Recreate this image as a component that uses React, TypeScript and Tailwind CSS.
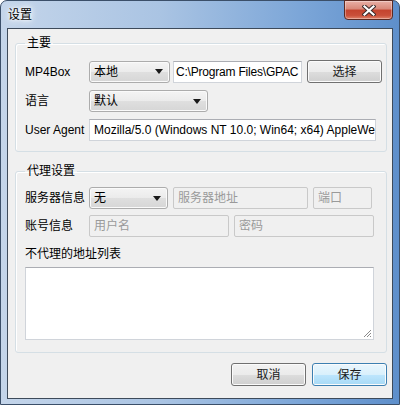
import React from "react";

const font = "font-['Liberation_Sans','Noto_Sans_CJK_SC',sans-serif]";

function Combo({ label, width }: { label: string; width: string }) {
  return (
    <div
      className={`${width} h-[22px] flex items-center justify-between pl-[4px] pr-[6px] rounded-[3px] border border-[#acacac] bg-[linear-gradient(180deg,#f4f4f4_0%,#ebebeb_50%,#dfdfdf_51%,#d6d6d6_100%)] shadow-[inset_0_0_0_1px_#fafafa]`}
    >
      <span className="text-[12px] text-black">{label}</span>
      <svg width="8" height="5" viewBox="0 0 8 5">
        <path d="M0 0h8L4 5z" fill="#1a1a1a" />
      </svg>
    </div>
  );
}

function TextBox({
  text,
  width,
  disabled,
  tight,
}: {
  text: string;
  width: string;
  disabled?: boolean;
  tight?: boolean;
}) {
  return (
    <div
      className={`${width} h-[22px] flex items-center overflow-hidden whitespace-nowrap text-[12px] border ${
        tight ? "pl-[2px] pr-0 tracking-[-0.2px]" : "px-[4px]"
      } ${
        disabled
          ? "border-[#c9c9c9] bg-[#f0f0f0] text-[#9a9a9a] rounded-[2px]"
          : "border-[#d0d4da] border-t-[#abadb3] bg-white text-black"
      }`}
    >
      {text}
    </div>
  );
}

function Button({ text, primary }: { text: string; primary?: boolean }) {
  return (
    <div
      className={`w-[75px] h-[23px] flex items-center justify-center rounded-[3px] border text-[12px] text-[#1a1a1a] shadow-[inset_0_0_0_1px_#fbfbfb] ${
        primary
          ? "border-[#3c7fb1] bg-[linear-gradient(180deg,#eaf6fd_0%,#d9f0fc_50%,#bee6fd_51%,#a7d9f5_100%)]"
          : "border-[#707070] bg-[linear-gradient(180deg,#f2f2f2_0%,#ebebeb_50%,#dddddd_51%,#cfcfcf_100%)]"
      }`}
    >
      {text}
    </div>
  );
}

function Group({ title, children, className }: { title: string; children: React.ReactNode; className?: string }) {
  return (
    <fieldset
      className={`border border-[#d5dfe5] rounded-[3px] shadow-[inset_1px_1px_0_#ffffff] pl-[9px] pr-[4px] ${className ?? ""}`}
    >
      <legend className="px-[2px] text-[12px] leading-[16px] text-black">{title}</legend>
      {children}
    </fieldset>
  );
}

function Label({ text }: { text: string }) {
  return <div className="w-[64px] shrink-0 text-[12px] text-black whitespace-nowrap">{text}</div>;
}

export default function App() {
  return (
    <div className={`${font} w-[400px] h-[405px] flex flex-col rounded-t-[7px] border border-[#3b4f69] bg-[linear-gradient(90deg,#c4d5ea_0%,#aac4e3_40%,#7ca6d8_75%,#5e8fcb_100%)] px-[6px] pb-[5px]`}>
      {/* Title bar */}
      <div className="h-[27px] flex items-start justify-between">
        <div className="pt-[6px] pl-[1px] text-[12px] leading-[16px] text-black [text-shadow:0_0_6px_#fff,0_0_3px_#fff,0_0_10px_#fff]">
          设置
        </div>
        <div className="w-[49px] h-[20px] -mt-px flex items-center justify-center rounded-b-[4px] border border-[#5b2a22] bg-[linear-gradient(180deg,#e9b0a6_0%,#d88778_45%,#c4432e_50%,#c9503a_80%,#e0826a_100%)] shadow-[inset_0_0_0_1px_rgba(255,255,255,0.35)]">
          <svg width="14" height="11" viewBox="0 0 14 11">
            <path d="M2.5 1.5l9 8M11.5 1.5l-9 8" stroke="#3a2a2a" strokeWidth="4.2" strokeLinecap="square" />
            <path d="M2.5 1.5l9 8M11.5 1.5l-9 8" stroke="#ffffff" strokeWidth="2.2" strokeLinecap="square" />
          </svg>
        </div>
      </div>

      {/* Client area */}
      <div className="flex-1 flex flex-col border border-[#3d4a5a] bg-[#f0f0f0] pt-[6px] pl-[7px] pr-[5px]">
        <Group title="主要" className="pt-[9px] pb-[10px]">
          <div className="flex flex-col gap-[7px]">
            <div className="flex items-center">
              <Label text="MP4Box" />
              <Combo label="本地" width="w-[81px]" />
              <div className="ml-[3px]">
                <TextBox text="C:\Program Files\GPAC" width="w-[129px]" tight />
              </div>
              <div className="ml-[5px]">
                <Button text="选择" />
              </div>
            </div>
            <div className="flex items-center">
              <Label text="语言" />
              <Combo label="默认" width="w-[119px]" />
            </div>
            <div className="flex items-center">
              <Label text="User Agent" />
              <TextBox
                text="Mozilla/5.0 (Windows NT 10.0; Win64; x64) AppleWebKit/537.36 (KHTML, like Gecko)"
                width="w-[287px]"
              />
            </div>
          </div>
        </Group>

        <Group title="代理设置" className="mt-[11px] pt-[8px] pb-[12px]">
          <div className="flex flex-col">
            <div className="flex items-center">
              <Label text="服务器信息" />
              <Combo label="无" width="w-[79px]" />
              <div className="ml-[5px]">
                <TextBox text="服务器地址" width="w-[135px]" disabled />
              </div>
              <div className="ml-[5px]">
                <TextBox text="端口" width="w-[59px]" disabled />
              </div>
            </div>
            <div className="flex items-center mt-[6px]">
              <Label text="账号信息" />
              <TextBox text="用户名" width="w-[140px]" disabled />
              <div className="ml-[5px]">
                <TextBox text="密码" width="w-[140px]" disabled />
              </div>
            </div>
            <div className="mt-[9px] text-[12px] leading-[16px] text-black">不代理的地址列表</div>
            <div className="relative mt-[5px] w-[349px] h-[73px] border border-[#d0d4da] border-t-[#abadb3] bg-white">
              <svg className="absolute right-[1px] bottom-[1px]" width="9" height="9" viewBox="0 0 9 9">
                <path d="M8 1L1 8M8 4L4 8M8 7L7 8" stroke="#8a8a8a" strokeWidth="1" />
              </svg>
            </div>
          </div>
        </Group>

        <div className="flex justify-end gap-[6px] mt-[10px]">
          <Button text="取消" />
          <Button text="保存" primary />
        </div>
      </div>
    </div>
  );
}
